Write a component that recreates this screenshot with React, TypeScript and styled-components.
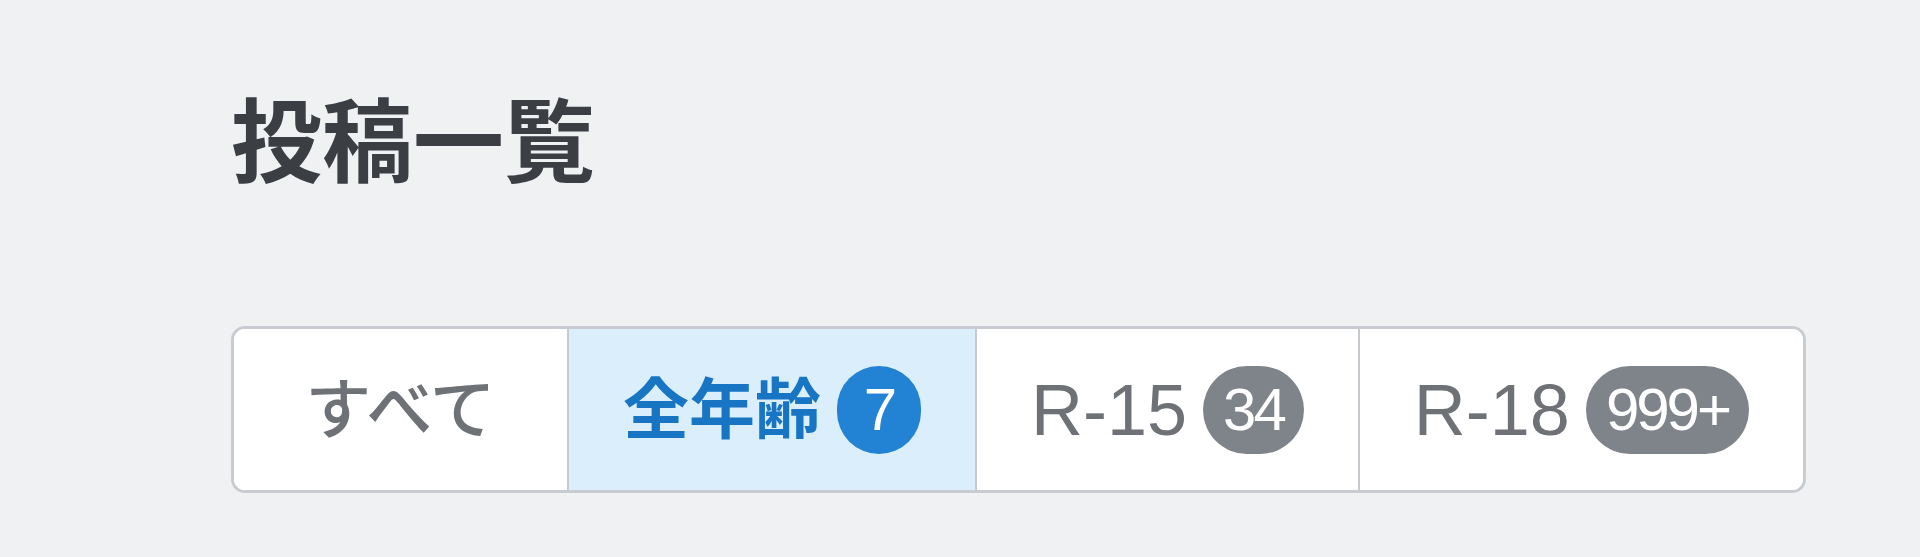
import styled, { createGlobalStyle } from 'styled-components';

// global
const GlobalStyle = createGlobalStyle`
  body {
    margin: 0;
    background: #eff1f3;
    font-family: "Liberation Sans", "Noto Sans CJK JP", sans-serif;
  }
`;

// style
const Page = styled.div`
  padding: 90px 0 0 231px;
`;
const Title = styled.h1`
  margin: 0;
  font-family: "Noto Sans CJK JP", sans-serif;
  font-size: 91px;
  line-height: 1;
  font-weight: 700;
  color: #3b3e43;
`;
const TabBar = styled.div`
  display: inline-flex;
  margin-top: 145px;
  height: 167px;
  box-sizing: border-box;
  border: 3px solid #c8ccd0;
  border-radius: 14px;
  overflow: hidden;
  background: #ffffff;
`;
const Tab = styled.button<{ active?: boolean }>`
  display: flex;
  align-items: center;
  justify-content: center;
  gap: 16px;
  min-width: 333px;
  box-sizing: border-box;
  padding: 0 54px;
  border: none;
  border-left: 2px solid #c6cacf;
  background: ${(props) => (props.active ? '#dbeefc' : '#ffffff')};
  color: ${(props) => (props.active ? '#1775c4' : '#6e7175')};
  font-weight: ${(props) => (props.active ? 700 : 500)};
  cursor: pointer;

  &:first-child {
    border-left: none;
  }
`;
const Label = styled.span<{ latin?: boolean }>`
  font-family: "Liberation Sans", "Noto Sans CJK JP", sans-serif;
  font-size: ${(props) => (props.latin ? '72px' : '66px')};
  line-height: 1;
`;
const Badge = styled.span<{ active?: boolean }>`
  display: inline-flex;
  align-items: center;
  justify-content: center;
  min-width: 84px;
  height: 88px;
  box-sizing: border-box;
  padding: 0 20px;
  border-radius: 44px;
  background: ${(props) => (props.active ? '#2282d3' : '#7f848a')};
  color: #ffffff;
  font-family: "Liberation Sans", sans-serif;
  font-size: 60px;
  font-weight: 400;
  letter-spacing: -3px;
`;

const tabs = [
  { label: 'すべて' },
  { label: '全年齢', count: '7', active: true },
  { label: 'R-15', count: '34', latin: true },
  { label: 'R-18', count: '999+', latin: true },
];

function App() {
  return (
    <>
      <GlobalStyle />
      <Page>
        <Title>投稿一覧</Title>
        <TabBar>
          {tabs.map((tab) => (
            <Tab key={tab.label} active={tab.active}>
              <Label latin={tab.latin}>{tab.label}</Label>
              {tab.count && <Badge active={tab.active}>{tab.count}</Badge>}
            </Tab>
          ))}
        </TabBar>
      </Page>
    </>
  );
}

export default App;
